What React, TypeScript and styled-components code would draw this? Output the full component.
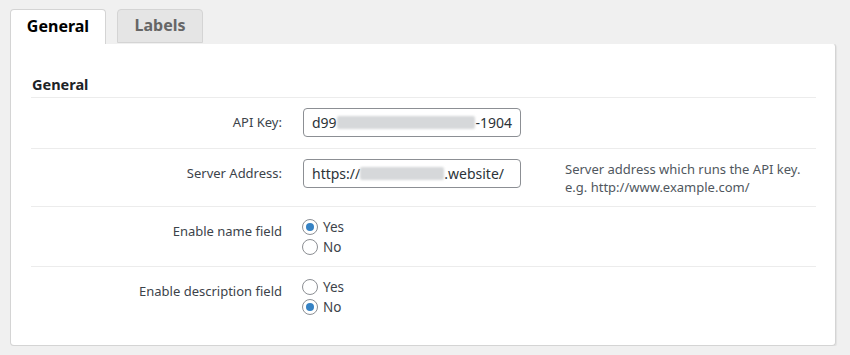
import React from "react";
import styled, { createGlobalStyle } from "styled-components";

const Global = createGlobalStyle`
  html, body { margin: 0; padding: 0; background: #f0f0f0; }
  body { font-family: "Noto Sans", "Open Sans", sans-serif; }
`;

const Page = styled.div`
  padding: 9px 14px 0 10px;
  width: 826px;
`;

const TabBar = styled.div`
  display: flex;
  gap: 11px;
  height: 34px;
  position: relative;
  z-index: 1;
`;

const Tab = styled.div<{ $active?: boolean }>`
  box-sizing: border-box;
  height: ${(p) => (p.$active ? "35px" : "34px")};
  width: ${(p) => (p.$active ? "96px" : "86px")};
  display: flex;
  align-items: center;
  justify-content: center;
  border: 1px solid #d4d4d4;
  border-bottom: ${(p) => (p.$active ? "none" : "1px solid #d4d4d4")};
  border-radius: 4px 4px 0 0;
  background: ${(p) => (p.$active ? "#ffffff" : "#e5e5e5")};
  color: ${(p) => (p.$active ? "#000000" : "#666666")};
  font-weight: 700;
  font-size: 16px;
  padding-bottom: 2px;
`;

const Panel = styled.div`
  box-sizing: border-box;
  width: 826px;
  height: 303px;
  background: #fff;
  border: 1px solid #d4d4d4;
  border-top-color: #f0f0f0;
  border-radius: 0 4px 4px 4px;
  box-shadow: 1px 1px 1px rgba(0, 0, 0, 0.06);
  padding: 30px 19px 0 20px;
`;

const Heading = styled.h2`
  margin: 0;
  font-size: 14.5px;
  font-weight: 700;
  color: #1d2327;
  line-height: 20px;
  padding: 0 0 3px 1px;
  border-bottom: 1px solid #ececec;
`;

const Row = styled.div<{ $last?: boolean }>`
  display: grid;
  grid-template-columns: 261px 1fr;
  border-bottom: ${(p) => (p.$last ? "none" : "1px solid #ececec")};
`;

const Label = styled.div<{ $top?: boolean }>`
  text-align: right;
  padding-right: 10px;
  font-size: 13px;
  color: #3c434a;
  line-height: 20px;
  display: flex;
  justify-content: flex-end;
  align-items: ${(p) => (p.$top ? "flex-start" : "center")};
  padding-top: ${(p) => (p.$top ? "14px" : "0")};
  padding-bottom: ${(p) => (p.$top ? "0" : "2px")};
`;

const Cell = styled.div<{ $pad: string }>`
  padding: ${(p) => p.$pad};
  padding-left: 11px;
  display: flex;
  align-items: flex-start;
  gap: 44px;
`;

const Field = styled.div`
  box-sizing: border-box;
  width: 218px;
  height: 29px;
  border: 1px solid #8c8f94;
  border-radius: 4px;
  display: flex;
  align-items: center;
  padding: 0 8px;
  font-size: 14px;
  color: #2c3338;
  white-space: nowrap;
`;

const Redacted = styled.span<{ $w: number }>`
  display: inline-block;
  width: ${(p) => p.$w}px;
  height: 13px;
  background: #d6d8da;
  filter: blur(1px);
  border-radius: 2px;
`;

const Desc = styled.div`
  font-size: 13px;
  line-height: 18px;
  color: #50575e;
  margin-top: 1px;
`;

const RadioGroup = styled.div`
  display: flex;
  flex-direction: column;
`;

const RadioLabel = styled.label`
  display: flex;
  align-items: center;
  height: 20px;
  font-size: 13.5px;
  color: #3c434a;
  gap: 5px;
  margin-left: -1px;
`;

const Radio = styled.input.attrs({ type: "radio" })`
  appearance: none;
  margin: 0;
  box-sizing: border-box;
  width: 16px;
  height: 16px;
  border: 1px solid #8c8f94;
  border-radius: 50%;
  background: #fff;
  display: grid;
  place-items: center;
  &:checked::before {
    content: "";
    width: 8px;
    height: 8px;
    border-radius: 50%;
    background: #3582c4;
  }
`;

export default function App() {
  return (
    <>
      <Global />
      <Page>
        <TabBar>
          <Tab $active>General</Tab>
          <Tab>Labels</Tab>
        </TabBar>
        <Panel>
          <Heading>General</Heading>
          <Row>
            <Label>API Key:</Label>
            <Cell $pad="10px 0 11px">
              <Field>
                d99
                <Redacted $w={145} />
                -1904
              </Field>
            </Cell>
          </Row>
          <Row>
            <Label $top>Server Address:</Label>
            <Cell $pad="10px 0 10px">
              <Field>
                https://
                <Redacted $w={84} />
                .website/
              </Field>
              <Desc>
                Server address which runs the API key.
                <br />
                e.g. http://www.example.com/
              </Desc>
            </Cell>
          </Row>
          <Row>
            <Label $top>Enable name field</Label>
            <Cell $pad="10px 0 9px">
              <RadioGroup>
                <RadioLabel>
                  <Radio name="name" defaultChecked />
                  Yes
                </RadioLabel>
                <RadioLabel>
                  <Radio name="name" />
                  No
                </RadioLabel>
              </RadioGroup>
            </Cell>
          </Row>
          <Row $last>
            <Label $top>Enable description field</Label>
            <Cell $pad="10px 0 10px">
              <RadioGroup>
                <RadioLabel>
                  <Radio name="desc" />
                  Yes
                </RadioLabel>
                <RadioLabel>
                  <Radio name="desc" defaultChecked />
                  No
                </RadioLabel>
              </RadioGroup>
            </Cell>
          </Row>
        </Panel>
      </Page>
    </>
  );
}
